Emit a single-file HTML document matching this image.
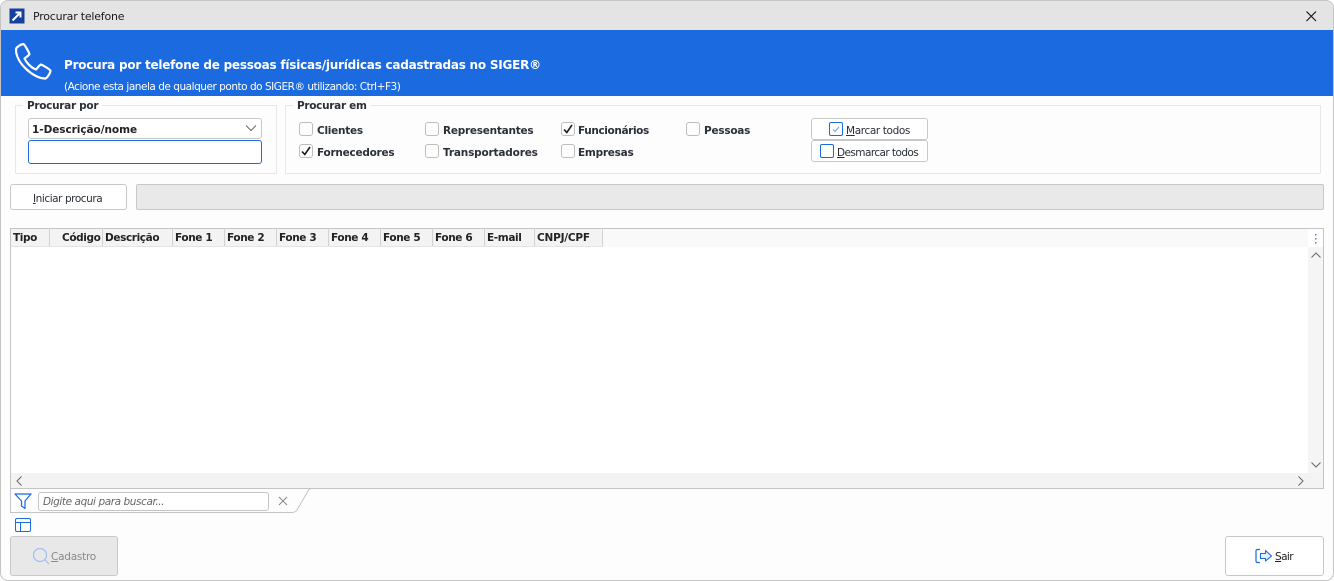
<!DOCTYPE html>
<html lang="pt">
<head>
<meta charset="utf-8">
<title>Procurar telefone</title>
<style>
html,body{margin:0;padding:0;width:1334px;height:581px;overflow:hidden;background:#fff}
body{font-family:"DejaVu Sans","Liberation Sans",sans-serif;font-size:10.5px;color:#222;position:relative}
#win{position:absolute;left:0;top:0;width:1332px;height:579px;border:1px solid #c4c4c4;border-radius:8px;background:#fdfdfd;overflow:hidden}
.a{position:absolute;box-sizing:border-box;white-space:nowrap}
.b{font-weight:bold;font-size:10.5px;color:#2a2f38;letter-spacing:-.25px}
.gb{border:1px solid #e8e8e8}
.leg{background:#fdfdfd;padding:0 4px;color:#2a2f38}
.cb{width:14px;height:14px;border:1px solid #bdbdbd;border-radius:3px;background:#fdfdfd}
.btn{background:#fff;border:1px solid #c8c8c8;border-radius:3px}
.hd{top:229px;height:18px;line-height:18px;font-weight:bold;font-size:10.5px;color:#222;letter-spacing:-.38px}
.sep{top:228px;width:1px;height:18px;background:#d2d2d2}
u{text-decoration:underline}
</style>
</head>
<body>
<div id="win"></div>

<!-- title bar -->
<div class="a" style="left:1px;top:1px;width:1332px;height:29px;background:#e4e4e4;border-radius:7px 7px 0 0"></div>
<svg class="a" style="left:9px;top:8px" width="16" height="16" viewBox="0 0 16 16"><rect x="0.5" y="0.5" width="15" height="15" fill="#14409c"/><path d="M3.5 12.5L11 5M6.5 4.5H11.5V9.5" stroke="#fff" stroke-width="2" fill="none"/></svg>
<div class="a" style="left:33px;top:9px;font-size:11px;line-height:16px;color:#1c1c1c;letter-spacing:-.22px">Procurar telefone</div>
<svg class="a" style="left:1304px;top:9px" width="14" height="14" viewBox="0 0 14 14"><path d="M2.5 2.5L12 12M12 2.5L2.5 12" stroke="#1a1a1a" stroke-width="1.2" fill="none"/></svg>

<!-- blue band -->
<div class="a" style="left:1px;top:30px;width:1332px;height:66px;background:#1b6ae0"></div>
<svg class="a" style="left:13px;top:42px" width="40" height="40" viewBox="0 0 40 40"><path d="M3 7.5C3 5.5 7 2.5 10.500 2C12 3 15.500 9.500 16.500 12C15.500 14 13 15 11.500 16.500C13 20 17.500 25.500 23 27.500C24.500 26 26 23.500 28 22.500C30.500 23.500 35.500 26.500 37.500 28.500C37.500 31 34.500 35.500 32.500 36.500C22 37 3 22 3 7.500Z" stroke="#fff" stroke-width="2.200" fill="none" stroke-linejoin="round"/></svg>
<div class="a" style="left:64px;top:57px;font-weight:bold;font-size:12px;line-height:17px;color:#fff;letter-spacing:-.23px">Procura por telefone de pessoas físicas/jurídicas cadastradas no SIGER®</div>
<div class="a" style="left:64px;top:80px;font-size:10.500px;line-height:15px;color:#fff;letter-spacing:-.47px">(Acione esta janela de qualquer ponto do SIGER® utilizando: Ctrl+F3)</div>

<!-- group 1 -->
<div class="a gb" style="left:15px;top:105px;width:262px;height:69px"></div>
<div class="a b leg" style="left:23px;top:99px;line-height:14px;letter-spacing:-.3px">Procurar por</div>
<div class="a btn" style="left:28px;top:118px;width:234px;height:21px"></div>
<div class="a b" style="left:32px;top:123px;line-height:15px;color:#222;letter-spacing:-.05px">1-Descrição/nome</div>
<svg class="a" style="left:245px;top:124px" width="12" height="8" viewBox="0 0 12 8"><path d="M1 1.500L6 6.500L11 1.500" stroke="#666" stroke-width="1" fill="none"/></svg>
<div class="a" style="left:28px;top:140px;width:234px;height:24px;background:#fff;border:1px solid #1b6ae0;border-radius:3px"></div>

<!-- group 2 -->
<div class="a gb" style="left:285px;top:105px;width:1036px;height:69px"></div>
<div class="a b leg" style="left:293px;top:99px;line-height:14px;letter-spacing:-.3px">Procurar em</div>

<div class="a cb" style="left:299px;top:122px"></div>
<div class="a b" style="left:317px;top:123px;line-height:16px">Clientes</div>
<div class="a cb" style="left:299px;top:144px"></div>
<svg class="a" style="left:299px;top:144px" width="14" height="14" viewBox="0 0 14 14"><path d="M3 7.500L5.800 10.500L11 3" stroke="#1a1a1a" stroke-width="1.600" fill="none"/></svg>
<div class="a b" style="left:317px;top:145px;line-height:16px">Fornecedores</div>

<div class="a cb" style="left:425px;top:122px"></div>
<div class="a b" style="left:443px;top:123px;line-height:16px">Representantes</div>
<div class="a cb" style="left:425px;top:144px"></div>
<div class="a b" style="left:443px;top:145px;line-height:16px;letter-spacing:-.17px">Transportadores</div>

<div class="a cb" style="left:561px;top:122px"></div>
<svg class="a" style="left:561px;top:122px" width="14" height="14" viewBox="0 0 14 14"><path d="M3 7.500L5.800 10.500L11 3" stroke="#1a1a1a" stroke-width="1.600" fill="none"/></svg>
<div class="a b" style="left:578px;top:123px;line-height:16px;letter-spacing:-.38px">Funcionários</div>
<div class="a cb" style="left:561px;top:144px"></div>
<div class="a b" style="left:578px;top:145px;line-height:16px">Empresas</div>

<div class="a cb" style="left:686px;top:122px"></div>
<div class="a b" style="left:704px;top:123px;line-height:16px">Pessoas</div>

<div class="a btn" style="left:811px;top:118px;width:117px;height:22px"></div>
<div class="a" style="left:829px;top:122px;width:14px;height:14px;border:1px solid #1b6ae0;border-radius:2px;background:#fff"></div>
<svg class="a" style="left:829px;top:122px" width="14" height="14" viewBox="0 0 14 14"><path d="M4 7.500L6 9.500L10 5" stroke="#6a9ee8" stroke-width="1" fill="none"/></svg>
<div class="a" style="left:846px;top:123px;line-height:16px;letter-spacing:-.38px;color:#2a2f38"><u>M</u>arcar todos</div>
<div class="a btn" style="left:811px;top:140px;width:117px;height:22px"></div>
<div class="a" style="left:820px;top:144px;width:14px;height:14px;border:1px solid #1b6ae0;border-radius:2px;background:#fff"></div>
<div class="a" style="left:837px;top:145px;line-height:16px;letter-spacing:-.57px;color:#2a2f38"><u>D</u>esmarcar todos</div>

<!-- action row -->
<div class="a btn" style="left:10px;top:184px;width:117px;height:26px"></div>
<div class="a" style="left:33px;top:191px;line-height:16px;letter-spacing:-.44px;color:#2a2f38"><u>I</u>niciar procura</div>
<div class="a" style="left:136px;top:184px;width:1188px;height:26px;background:#e9e9e9;border:1px solid #c8c8c8;border-radius:2px"></div>

<!-- grid -->
<div class="a" style="left:10px;top:228px;width:1314px;height:261px;background:#fff;border:1px solid #c4c4c4"></div>
<div class="a" style="left:11px;top:229px;width:592px;height:18px;background:#f3f3f3"></div>
<div class="a" style="left:603px;top:229px;width:705px;height:18px;background:#f9f9f9"></div>
<div class="a" style="left:1308px;top:229px;width:15px;height:244px;background:#f5f5f5"></div>
<div class="a" style="left:1308px;top:229px;width:15px;height:18px;background:#fff"></div>
<div class="a" style="left:11px;top:473px;width:1312px;height:15px;background:#f3f3f3"></div>

<div class="a sep" style="left:49px"></div>
<div class="a sep" style="left:102px"></div>
<div class="a sep" style="left:172px"></div>
<div class="a sep" style="left:224px"></div>
<div class="a sep" style="left:276px"></div>
<div class="a sep" style="left:328px"></div>
<div class="a sep" style="left:380px"></div>
<div class="a sep" style="left:432px"></div>
<div class="a sep" style="left:484px"></div>
<div class="a sep" style="left:534px"></div>
<div class="a sep" style="left:602px"></div>
<div class="a" style="left:11px;top:246px;width:592px;height:1px;background:#e4e4e4"></div>

<div class="a hd" style="left:13px">Tipo</div>
<div class="a hd" style="left:62px">Código</div>
<div class="a hd" style="left:105px">Descrição</div>
<div class="a hd" style="left:175px">Fone 1</div>
<div class="a hd" style="left:227px">Fone 2</div>
<div class="a hd" style="left:279px">Fone 3</div>
<div class="a hd" style="left:331px">Fone 4</div>
<div class="a hd" style="left:383px">Fone 5</div>
<div class="a hd" style="left:435px">Fone 6</div>
<div class="a hd" style="left:487px">E-mail</div>
<div class="a hd" style="left:537px;letter-spacing:-.2px">CNPJ/CPF</div>

<svg class="a" style="left:1308px;top:229px" width="15" height="18" viewBox="0 0 15 18"><rect x="7" y="5" width="1.500" height="1.500" fill="#5a7fc0"/><rect x="7" y="9" width="1.500" height="1.500" fill="#5a7fc0"/><rect x="7" y="13" width="1.500" height="1.500" fill="#5a7fc0"/></svg>
<svg class="a" style="left:1310px;top:251px" width="12" height="8" viewBox="0 0 12 8"><path d="M1.500 6.500L6 2L10.500 6.500" stroke="#666" stroke-width="1" fill="none"/></svg>
<svg class="a" style="left:1310px;top:461px" width="12" height="8" viewBox="0 0 12 8"><path d="M1.500 1.500L6 6L10.500 1.500" stroke="#666" stroke-width="1" fill="none"/></svg>
<svg class="a" style="left:15px;top:475px" width="8" height="12" viewBox="0 0 8 12"><path d="M6.500 1.500L2 6L6.500 10.500" stroke="#666" stroke-width="1" fill="none"/></svg>
<svg class="a" style="left:1297px;top:475px" width="8" height="12" viewBox="0 0 8 12"><path d="M1.500 1.500L6 6L1.500 10.500" stroke="#666" stroke-width="1" fill="none"/></svg>

<!-- filter tab -->
<svg class="a" style="left:10px;top:488px" width="302" height="28" viewBox="0 0 302 28"><path d="M0.500 0V24.500H282Q285 24.500 287 22L298 3Q299 1 301 0.500" stroke="#c4c4c4" stroke-width="1" fill="none"/></svg>
<svg class="a" style="left:14px;top:493px" width="18" height="17" viewBox="0 0 18 17"><path d="M1 1H17L11 8V15.500L7.500 13V8Z" stroke="#1b6ae0" stroke-width="1.200" fill="none" stroke-linejoin="round"/></svg>
<div class="a" style="left:38px;top:492px;width:231px;height:19px;background:#fff;border:1px solid #c4c4c4;border-radius:3px"></div>
<div class="a" style="left:43px;top:495px;line-height:15px;font-style:italic;color:#666;letter-spacing:-.42px">Digite aqui para buscar...</div>
<svg class="a" style="left:278px;top:496px" width="10" height="10" viewBox="0 0 10 10"><path d="M1 1L9 9M9 1L1 9" stroke="#888" stroke-width="1" fill="none"/></svg>
<svg class="a" style="left:15px;top:518px" width="16" height="14" viewBox="0 0 16 14"><rect x="0.500" y="0.500" width="15" height="13" rx="1.500" stroke="#1b6ae0" fill="none"/><path d="M0.500 4.500H15.500M5.500 4.500V13.500" stroke="#1b6ae0" fill="none"/></svg>

<!-- bottom buttons -->
<div class="a" style="left:10px;top:536px;width:108px;height:40px;background:#e8e8e8;border:1px solid #c8c8c8;border-radius:3px"></div>
<svg class="a" style="left:32px;top:547px" width="18" height="18" viewBox="0 0 18 18"><circle cx="8" cy="8" r="6.500" stroke="#9dbfef" stroke-width="1.200" fill="none"/><path d="M12.500 12.500L17 17" stroke="#9dbfef" stroke-width="1.200"/></svg>
<div class="a" style="left:51px;top:549px;line-height:16px;letter-spacing:-.25px;color:#8a8a8a"><u>C</u>adastro</div>

<div class="a btn" style="left:1225px;top:536px;width:99px;height:40px"></div>
<svg class="a" style="left:1255px;top:548px" width="18" height="16" viewBox="0 0 18 16"><path d="M5 1.500H2.500Q1 1.500 1 3V13Q1 14.500 2.500 14.500H5" stroke="#1b6ae0" stroke-width="1.200" fill="none"/><path d="M5.500 5.500H10.500V2.500L16.500 8L10.500 13V10.500H5.500Z" stroke="#1b6ae0" stroke-width="1.100" fill="#e8f0fc" stroke-linejoin="round"/></svg>
<div class="a" style="left:1275px;top:549px;line-height:16px;letter-spacing:-.6px;color:#222"><u>S</u>air</div>
</body>
</html>
